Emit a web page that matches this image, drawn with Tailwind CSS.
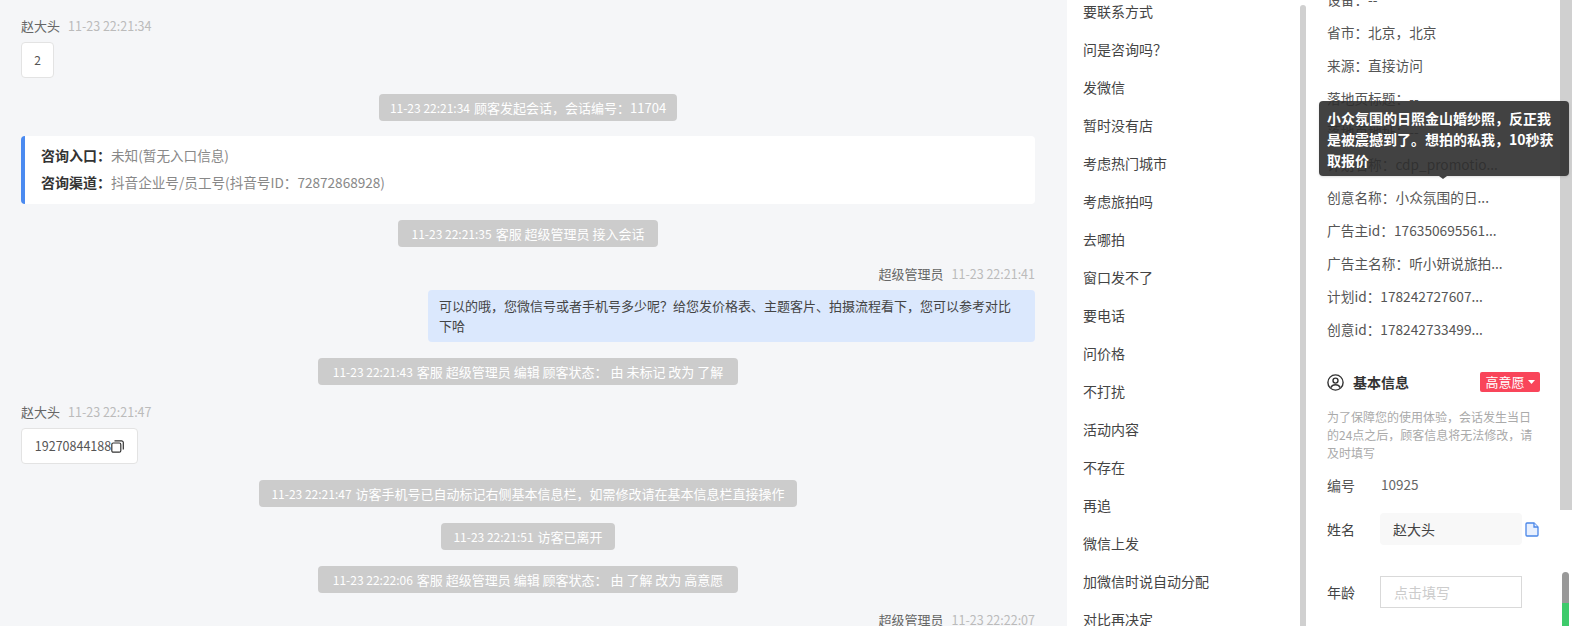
<!DOCTYPE html>
<html lang="zh-CN">
<head>
  <meta charset="UTF-8" />
  <title>会话详情</title>
  <script src="https://cdn.jsdelivr.net/npm/@tailwindcss/browser@4"></script>
</head>
<body class="bg-white overflow-hidden">
  <div class="flex w-[1572px] h-[626px] overflow-hidden font-['Noto_Sans_CJK_SC','Liberation_Sans',sans-serif] text-[14px] text-[#444]">

    <!-- chat -->
    <div class="w-[1067px] h-[626px] shrink-0 overflow-hidden bg-[#f5f6f8] pt-4 pl-[21px] pr-[32px] flex flex-col items-center">
      <div class="self-start h-5 shrink-0 flex items-center gap-2 text-[13px] text-[#666]"><span>赵大头</span><span class="text-[12.5px] text-[#bbb]">11-23 22:21:34</span></div>
      <div class="self-start mt-1.5 h-9 w-[33px] shrink-0 flex items-center justify-center bg-white border border-[#e3e3e3] rounded text-xs text-[#555]">2</div>

      <div class="mt-4 w-[298px] h-[27px] shrink-0 flex items-center justify-center gap-1 bg-[#ccc] rounded-sm text-[13px] text-white whitespace-nowrap"><span class="text-xs">11-23 22:21:34</span><span>顾客发起会话，会话编号：11704</span></div>

      <div class="self-stretch mt-[15px] h-[68px] shrink-0 bg-white border-l-4 border-[#4a8af0] rounded-sm pl-4 pb-1 flex flex-col justify-center gap-[5px] text-[13.6px] text-[#888]">
        <div class="h-[22px] leading-[22px]"><b class="text-sm font-bold text-[#333]">咨询入口：</b>未知(暂无入口信息)</div>
        <div class="h-[22px] leading-[22px]"><b class="text-sm font-bold text-[#333]">咨询渠道：</b>抖音企业号/员工号(抖音号ID：72872868928)</div>
      </div>

      <div class="mt-4 w-[260px] h-[27px] shrink-0 flex items-center justify-center gap-1 bg-[#ccc] rounded-sm text-[13px] text-white whitespace-nowrap"><span class="text-xs">11-23 22:21:35</span><span>客服 超级管理员 接入会话</span></div>

      <div class="self-end mt-[17px] h-5 shrink-0 flex items-center gap-2 text-[13px] text-[#666]"><span>超级管理员</span><span class="text-[12.5px] text-[#bbb]">11-23 22:21:41</span></div>
      <div class="self-end mt-1.5 w-[607px] h-[52px] shrink-0 bg-[#dbe8fd] rounded pl-[11px] pr-[20px] py-[6px] text-[13px] leading-[20px] text-[#444]">可以的哦，您微信号或者手机号多少呢？给您发价格表、主题客片、拍摄流程看下，您可以参考对比下哈</div>

      <div class="mt-4 w-[420px] h-[27px] shrink-0 flex items-center justify-center gap-1 bg-[#ccc] rounded-sm text-[13px] text-white whitespace-nowrap"><span class="text-xs">11-23 22:21:43</span><span>客服 超级管理员 编辑 顾客状态： 由 未标记 改为 了解</span></div>

      <div class="self-start mt-[17px] h-5 shrink-0 flex items-center gap-2 text-[13px] text-[#666]"><span>赵大头</span><span class="text-[12.5px] text-[#bbb]">11-23 22:21:47</span></div>
      <div class="self-start mt-1.5 w-[117px] h-9 shrink-0 flex items-center justify-center bg-white border border-[#e3e3e3] rounded text-[12.5px] text-[#555]">
        <span>19270844188</span>
        <svg class="w-[13px] h-[13px] shrink-0" viewBox="0 0 13 13" fill="none" stroke="#333" stroke-width="1.2"><rect x="0.8" y="3" width="9" height="9.2" rx="1.5" /><path d="M3.5 0.8h7a1.8 1.8 0 0 1 1.8 1.8v7" /></svg>
      </div>

      <div class="mt-4 w-[538px] h-[27px] shrink-0 flex items-center justify-center gap-1 bg-[#ccc] rounded-sm text-[13px] text-white whitespace-nowrap"><span class="text-xs">11-23 22:21:47</span><span>访客手机号已自动标记右侧基本信息栏，如需修改请在基本信息栏直接操作</span></div>
      <div class="mt-4 w-[174px] h-[27px] shrink-0 flex items-center justify-center gap-1 bg-[#ccc] rounded-sm text-[13px] text-white whitespace-nowrap"><span class="text-xs">11-23 22:21:51</span><span>访客已离开</span></div>
      <div class="mt-4 w-[420px] h-[27px] shrink-0 flex items-center justify-center gap-1 bg-[#ccc] rounded-sm text-[13px] text-white whitespace-nowrap"><span class="text-xs">11-23 22:22:06</span><span>客服 超级管理员 编辑 顾客状态： 由 了解 改为 高意愿</span></div>

      <div class="self-end mt-[17px] h-5 shrink-0 flex items-center gap-2 text-[13px] text-[#666]"><span>超级管理员</span><span class="text-[12.5px] text-[#bbb]">11-23 22:22:07</span></div>
    </div>

    <!-- quick tags -->
    <div class="w-[233px] h-[626px] shrink-0 overflow-hidden pl-4">
      <ul class="-mt-[8px] text-sm text-[#444]">
        <li class="h-[38px] leading-[38px]">要联系方式</li>
        <li class="h-[38px] leading-[38px]">问是咨询吗？</li>
        <li class="h-[38px] leading-[38px]">发微信</li>
        <li class="h-[38px] leading-[38px]">暂时没有店</li>
        <li class="h-[38px] leading-[38px]">考虑热门城市</li>
        <li class="h-[38px] leading-[38px]">考虑旅拍吗</li>
        <li class="h-[38px] leading-[38px]">去哪拍</li>
        <li class="h-[38px] leading-[38px]">窗口发不了</li>
        <li class="h-[38px] leading-[38px]">要电话</li>
        <li class="h-[38px] leading-[38px]">问价格</li>
        <li class="h-[38px] leading-[38px]">不打扰</li>
        <li class="h-[38px] leading-[38px]">活动内容</li>
        <li class="h-[38px] leading-[38px]">不存在</li>
        <li class="h-[38px] leading-[38px]">再追</li>
        <li class="h-[38px] leading-[38px]">微信上发</li>
        <li class="h-[38px] leading-[38px]">加微信时说自动分配</li>
        <li class="h-[38px] leading-[38px]">对比再决定</li>
      </ul>
    </div>
    <div class="w-[6px] h-[621px] mt-[5px] shrink-0 bg-[#d0d0d0] rounded-t-[3px]"></div>

    <!-- customer info -->
    <div class="relative w-[254px] h-[626px] shrink-0 pl-[21px]">
      <div class="h-[626px] overflow-hidden">
        <div class="-mt-[17px] text-[13.7px] text-[#555]">
          <div class="h-[33px] leading-[33px]">设备：--</div>
          <div class="h-[33px] leading-[33px]">省市：北京，北京</div>
          <div class="h-[33px] leading-[33px]">来源：直接访问</div>
          <div class="h-[33px] leading-[33px]">落地页标题：--</div>
          <div class="h-[33px] leading-[33px]">落地页地址：--</div>
          <div class="h-[33px] leading-[33px]">计划名称：cdp_promotio...</div>
          <div class="h-[33px] leading-[33px]">创意名称：小众氛围的日...</div>
          <div class="h-[33px] leading-[33px]">广告主id：176350695561...</div>
          <div class="h-[33px] leading-[33px]">广告主名称：听小妍说旅拍...</div>
          <div class="h-[33px] leading-[33px]">计划id：178242727607...</div>
          <div class="h-[33px] leading-[33px]">创意id：178242733499...</div>
        </div>

        <div class="mt-[26px] w-[213px] h-5 flex items-center justify-between">
          <div class="flex items-center gap-[9px] text-sm font-bold text-[#333]">
            <svg class="w-[17px] h-[17px]" viewBox="0 0 17 17" fill="none" stroke="#333" stroke-width="1.4"><circle cx="8.5" cy="8.5" r="7.6" /><circle cx="8.5" cy="6.6" r="2.5" /><path d="M3.8 13.6c1-2 2.7-2.8 4.7-2.8s3.7.8 4.7 2.8" /></svg>
            <span>基本信息</span>
          </div>
          <div class="w-[60px] h-5 flex items-center justify-center gap-[3px] bg-[#f9455a] rounded-[2px] text-[13px] text-white">
            <span>高意愿</span>
            <svg class="w-[7px] h-1" viewBox="0 0 7 4" fill="#fff"><path d="M0 0h7L3.5 4z" /></svg>
          </div>
        </div>

        <p class="mt-[16px] w-[206px] text-xs leading-[18px] text-[#aaa]">为了保障您的使用体验，会话发生当日的24点之后，顾客信息将无法修改，请及时填写</p>

        <div class="mt-[13px] h-5 flex items-center text-sm">
          <span class="w-[54px] text-[#555]">编号</span><span class="text-[13.5px] text-[#666]">10925</span>
        </div>

        <div class="mt-[18px] h-8 flex items-center text-sm">
          <span class="w-[53px] text-[#444]">姓名</span>
          <div class="w-[142px] h-8 flex items-center bg-[#f8f8f8] rounded-sm pl-[13px] text-[#444]">赵大头</div>
          <svg class="ml-[3px] w-[14px] h-[15px]" viewBox="0 0 14 15" fill="#e8f0fe" stroke="#4a86e8" stroke-width="1.3"><path d="M1 2a1 1 0 0 1 1-1h7l4 4v8a1 1 0 0 1-1 1H2a1 1 0 0 1-1-1z" /><path d="M9 1v4h4" /></svg>
        </div>

        <div class="mt-[31px] h-8 flex items-center text-sm">
          <span class="w-[53px] text-[#444]">年龄</span>
          <input class="w-[142px] h-8 border border-[#d9d9d9] pl-[13px] bg-white text-sm placeholder:text-[#ccc]" placeholder="点击填写" />
        </div>
      </div>

      <!-- tooltip over the rows -->
      <div class="absolute left-[13px] top-[101px] w-[250px] h-[75px] rounded-sm bg-[#2e2e2e]/90 px-2 pt-[7px] text-sm leading-[21px] font-semibold text-white shadow">
        小众氛围的日照金山婚纱照，反正我是被震撼到了。想拍的私我，10秒获取报价
        <span class="absolute left-[120px] -bottom-[3px] w-0 h-0 border-x-[4px] border-x-transparent border-t-[3px] border-t-[#2e2e2e]/90"></span>
      </div>
    </div>

    <!-- page scrollbar -->
    <div class="w-[12px] h-[626px] shrink-0 flex flex-col">
      <div class="h-[510px] bg-[#d0d0d0]"></div>
      <div class="mt-[62px] ml-[2px] w-[7px] h-[54px] rounded-t-[4px] overflow-hidden bg-[#999]">
        <div class="mt-[31px] h-[23px] bg-[#3ecb6b]"></div>
      </div>
    </div>
  </div>
</body>
</html>
